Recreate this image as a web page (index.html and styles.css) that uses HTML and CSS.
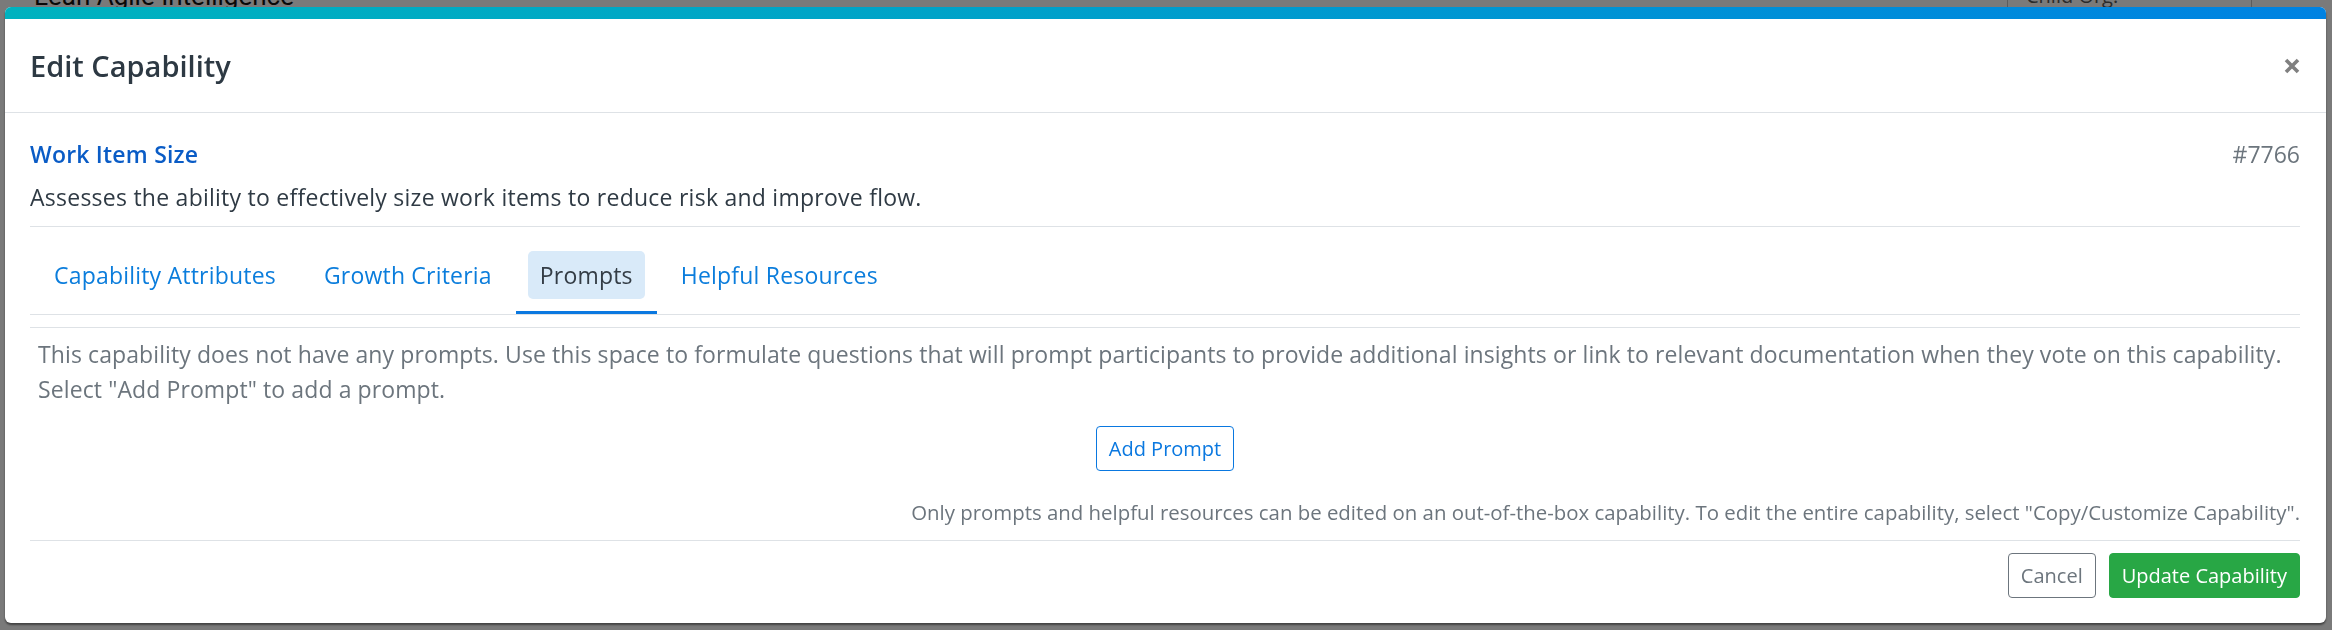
FILE: index.html
```html
<!DOCTYPE html>
<html lang="en">
<head>
<meta charset="utf-8">
<title>Edit Capability</title>
<link rel="stylesheet" href="styles.css">
</head>
<body>
<div class="page">
  <div class="page-header">
    <span class="brand">Lean Agile Intelligence</span>
    <span class="org-box">Child Org.</span>
  </div>
</div>
<div class="backdrop"></div>
<div class="modal">
  <div class="modal-bar"></div>
  <div class="modal-header">
    <h1 class="modal-title">Edit Capability</h1>
    <button class="close" aria-label="Close">
      <svg width="16" height="16" viewBox="0 0 16 16"><path d="M2 2 L14 14 M14 2 L2 14" stroke="#808080" stroke-width="3.6" stroke-linecap="butt"/></svg>
    </button>
  </div>
  <div class="modal-body">
    <div class="summary">
      <div class="title-row">
        <span class="cap-name">Work Item Size</span>
        <span class="cap-id">#7766</span>
      </div>
      <p class="cap-desc">Assesses the ability to effectively size work items to reduce risk and improve flow.</p>
    </div>
    <div class="tabs">
      <div class="tab"><span class="tab-label">Capability Attributes</span></div>
      <div class="tab"><span class="tab-label">Growth Criteria</span></div>
      <div class="tab active"><span class="tab-label">Prompts</span></div>
      <div class="tab"><span class="tab-label">Helpful Resources</span></div>
    </div>
    <div class="tab-content">
      <p class="empty-text">This capability does not have any prompts. Use this space to formulate questions that will prompt participants to provide additional insights or link to relevant documentation when they vote on this capability. Select "Add Prompt" to add a prompt.</p>
      <div class="add-row"><button class="btn btn-outline-primary">Add Prompt</button></div>
    </div>
    <p class="note">Only prompts and helpful resources can be edited on an out-of-the-box capability. To edit the entire capability, select "Copy/Customize Capability".</p>
  </div>
  <div class="modal-footer">
    <button class="btn btn-outline-secondary">Cancel</button>
    <button class="btn btn-success">Update Capability</button>
  </div>
</div>
</body>
</html>
```
FILE: styles.css
```css
* { box-sizing: border-box; }
html, body { margin: 0; padding: 0; }
body {
  width: 2332px;
  height: 630px;
  overflow: hidden;
  font-family: "Open Sans", "Noto Sans", sans-serif;
  background: #fff;
}
.page { height: 630px; background: #f4f4f4; }
.page-header {
  height: 60px;
  display: flex;
  align-items: flex-start;
  justify-content: space-between;
  padding: 0 80px 0 34px;
}
.brand {
  font-family: Roboto, sans-serif;
  font-size: 26px;
  line-height: 26px;
  margin-top: -17px;
  color: #111;
}
.org-box {
  margin-top: -20px;
  height: 40px;
  width: 245px;
  border: 1px solid #bbb;
  color: #555;
  font-size: 20px;
  padding: 0 0 0 18px;
  line-height: 30px;
}
.backdrop {
  position: fixed;
  inset: 0;
  background: rgba(0,0,0,0.5);
}
.modal {
  position: fixed;
  left: 5px;
  top: 7px;
  width: 2321px;
  height: 616px;
  background: #fff;
  border-radius: 6px;
  overflow: hidden;
  box-shadow: 0 2px 2px rgba(0,0,0,0.45);
  display: flex;
  flex-direction: column;
}
.modal-bar {
  height: 12px;
  flex: none;
  background: linear-gradient(90deg, #00b2bf 0%, #00a3c8 40%, #0082e2 100%);
}
.modal-header {
  height: 94px;
  flex: none;
  display: flex;
  align-items: center;
  justify-content: space-between;
  padding: 0 26px 0 25px;
  border-bottom: 1px solid #dee2e6;
}
.modal-title {
  margin: 0;
  font-size: 29px;
  font-weight: 600;
  color: #2d3943;
  line-height: 34px;
}
.close {
  border: 0;
  background: none;
  padding: 0;
  width: 16px;
  height: 16px;
  display: flex;
}
.modal-body {
  padding: 25px 26px 0 25px;
  flex: 1;
}
.summary {
  padding-bottom: 12px;
  border-bottom: 1px solid #dee2e6;
}
.title-row {
  display: flex;
  justify-content: space-between;
  line-height: 33px;
  font-size: 23px;
}
.cap-name {
  color: #0a5cc6;
  font-weight: 600;
  letter-spacing: 0.2px;
}
.cap-id {
  color: #6c757d;
}
.cap-desc {
  margin: 10px 0 0 0;
  font-size: 23px;
  letter-spacing: 0.25px;
  line-height: 33px;
  color: #2f3a44;
}
.tabs {
  display: flex;
  padding-top: 24px;
  border-bottom: 1px solid #dee2e6;
}
.tab {
  padding: 0 12px 12px;
  border-bottom: 3px solid transparent;
}
.tab.active { border-bottom-color: #0a78e0; }
.tab-label {
  height: 48px;
  display: flex;
  align-items: center;
  padding: 0 12px;
  border-radius: 5px;
  font-size: 23px;
  letter-spacing: 0.2px;
  color: #0b7ddc;
}
.tab.active .tab-label {
  background: #d9eaf9;
  color: #343d46;
}
.tab-content {
  margin-top: 12px;
  border-top: 1px solid #dee2e6;
  padding: 9px 8px 0 8px;
}
.empty-text {
  margin: 0;
  font-size: 23px;
  letter-spacing: 0.1px;
  line-height: 35px;
  color: #6c757d;
}
.add-row {
  display: flex;
  justify-content: center;
  margin-top: 19px;
}
.btn {
  height: 45px;
  padding: 0 12px;
  border-radius: 4px;
  font-family: "Open Sans", "Noto Sans", sans-serif;
  font-size: 20px;
  background: #fff;
  border: 1px solid transparent;
}
.btn-outline-primary {
  border-color: #0a78e0;
  color: #0a78e0;
}
.btn-outline-secondary {
  border-color: #6c757d;
  color: #6c757d;
}
.btn-success {
  background: #28a745;
  border-color: #28a745;
  color: #fff;
}
.note {
  margin: 27px 0 0 0;
  text-align: right;
  font-size: 20.4px;
  line-height: 28px;
  color: #6c757d;
}
.modal-footer {
  flex: none;
  margin: 0 26px 0 25px;
  border-top: 1px solid #dee2e6;
  padding: 12px 0 25px;
  display: flex;
  justify-content: flex-end;
  gap: 13px;
}
```
